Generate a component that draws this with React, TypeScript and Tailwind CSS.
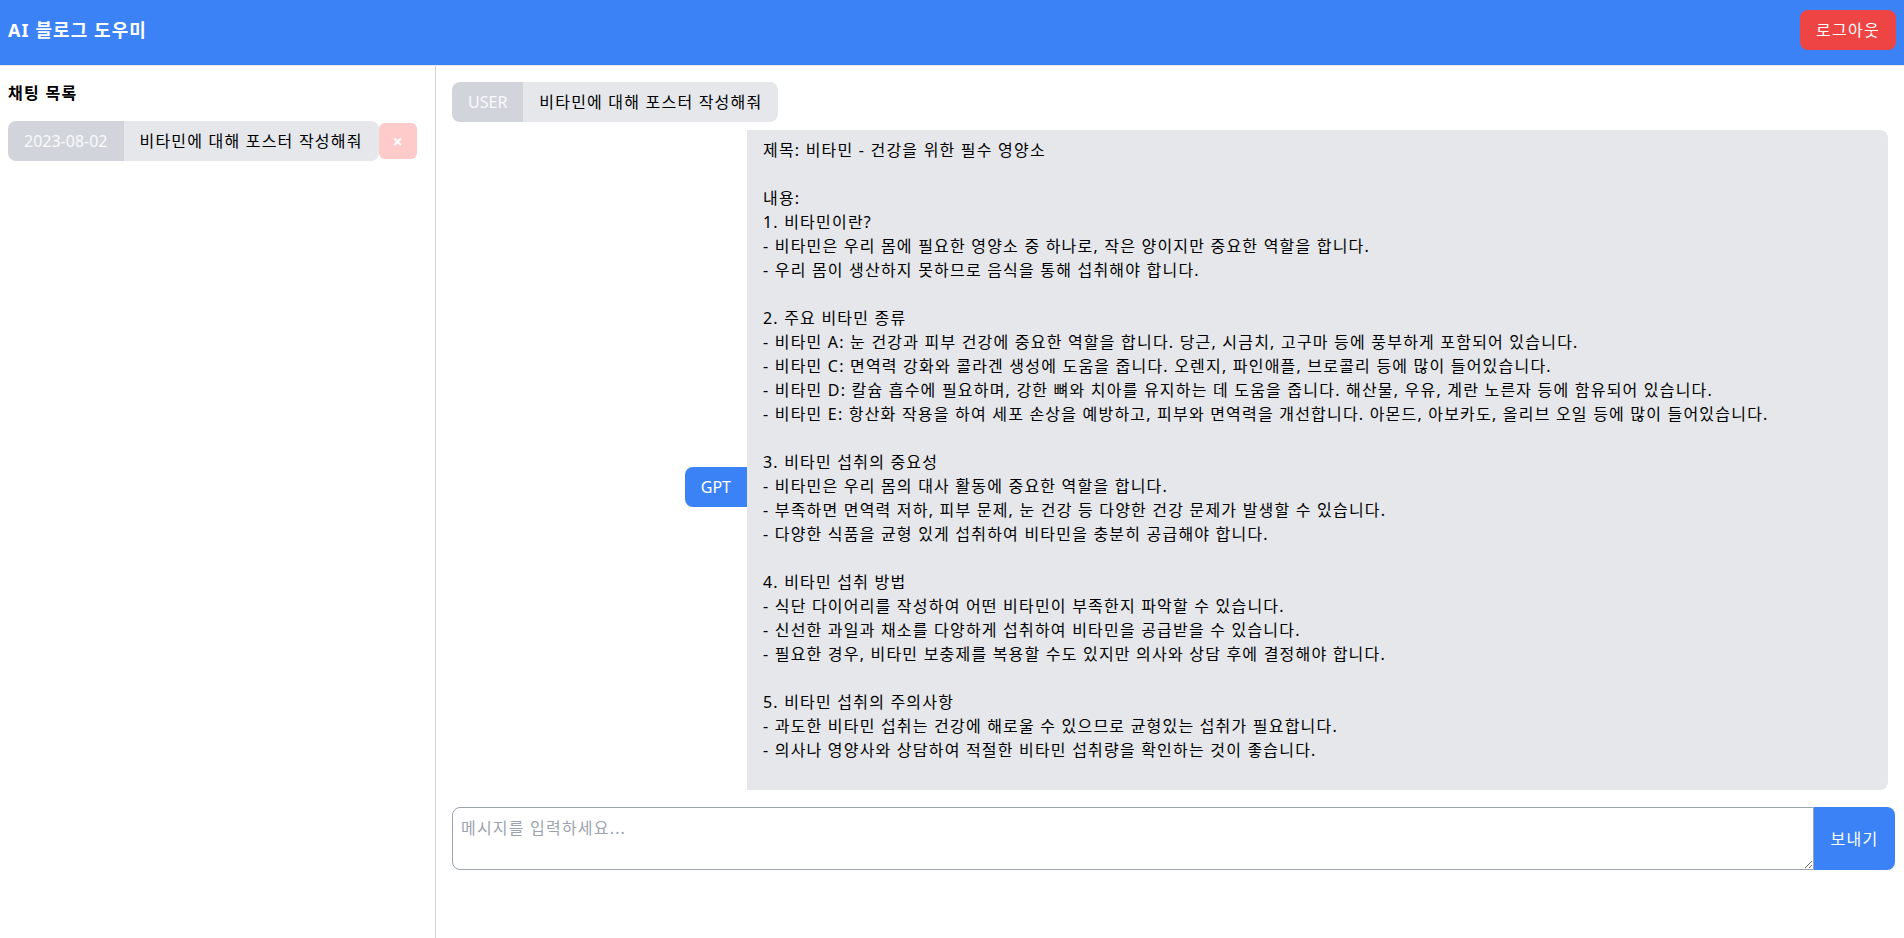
import React from "react";

const gptText = `제목: 비타민 - 건강을 위한 필수 영양소

내용:
1. 비타민이란?
- 비타민은 우리 몸에 필요한 영양소 중 하나로, 작은 양이지만 중요한 역할을 합니다.
- 우리 몸이 생산하지 못하므로 음식을 통해 섭취해야 합니다.

2. 주요 비타민 종류
- 비타민 A: 눈 건강과 피부 건강에 중요한 역할을 합니다. 당근, 시금치, 고구마 등에 풍부하게 포함되어 있습니다.
- 비타민 C: 면역력 강화와 콜라겐 생성에 도움을 줍니다. 오렌지, 파인애플, 브로콜리 등에 많이 들어있습니다.
- 비타민 D: 칼슘 흡수에 필요하며, 강한 뼈와 치아를 유지하는 데 도움을 줍니다. 해산물, 우유, 계란 노른자 등에 함유되어 있습니다.
- 비타민 E: 항산화 작용을 하여 세포 손상을 예방하고, 피부와 면역력을 개선합니다. 아몬드, 아보카도, 올리브 오일 등에 많이 들어있습니다.

3. 비타민 섭취의 중요성
- 비타민은 우리 몸의 대사 활동에 중요한 역할을 합니다.
- 부족하면 면역력 저하, 피부 문제, 눈 건강 등 다양한 건강 문제가 발생할 수 있습니다.
- 다양한 식품을 균형 있게 섭취하여 비타민을 충분히 공급해야 합니다.

4. 비타민 섭취 방법
- 식단 다이어리를 작성하여 어떤 비타민이 부족한지 파악할 수 있습니다.
- 신선한 과일과 채소를 다양하게 섭취하여 비타민을 공급받을 수 있습니다.
- 필요한 경우, 비타민 보충제를 복용할 수도 있지만 의사와 상담 후에 결정해야 합니다.

5. 비타민 섭취의 주의사항
- 과도한 비타민 섭취는 건강에 해로울 수 있으므로 균형있는 섭취가 필요합니다.
- 의사나 영양사와 상담하여 적절한 비타민 섭취량을 확인하는 것이 좋습니다.`;

export default function App() {
  return (
    <div
      className="min-h-screen flex flex-col bg-white text-black"
      style={{ fontFamily: '"Noto Sans", "Noto Sans CJK KR", sans-serif' }}
    >
      <header className="h-[66px] flex items-start justify-between px-2 pt-[10px] bg-[#3b82f6] border-b border-[#e5e7eb]">
        <h1 className="h-10 flex items-center text-lg font-bold text-white tracking-[0.06em]">AI 블로그 도우미</h1>
        <button className="h-10 px-4 rounded-lg bg-[#ef4444] text-white text-base tracking-[0.08em]">로그아웃</button>
      </header>
      <div className="flex-1 flex">
        <aside className="w-[436px] shrink-0 border-r border-[#d1d5db] px-2 pt-[15px]">
          <h2 className="text-base font-bold mb-4 tracking-[0.08em]">채팅 목록</h2>
          <div className="flex items-center">
            <div className="flex h-10 items-center">
              <span className="h-10 flex items-center px-4 rounded-l-lg bg-[#d1d5db] text-[#f9fafb] text-base">2023-08-02</span>
              <span className="h-10 flex items-center px-4 rounded-r-lg bg-[#e5e7eb] text-base tracking-[0.075em]">비타민에 대해 포스터 작성해줘</span>
            </div>
            <button className="w-[38px] h-9 rounded-md bg-[#fecaca] text-white text-lg font-bold flex items-center justify-center">×</button>
          </div>
        </aside>
        <main className="flex-1 flex flex-col pt-4">
          <div className="px-4 flex flex-col gap-2">
            <div className="flex">
              <div className="flex h-10">
                <span className="h-10 flex items-center px-4 rounded-l-lg bg-[#d1d5db] text-[#f9fafb] text-base">USER</span>
                <span className="h-10 flex items-center px-4 rounded-r-lg bg-[#e5e7eb] text-base tracking-[0.075em]">비타민에 대해 포스터 작성해줘</span>
              </div>
            </div>
            <div className="flex justify-end items-center">
              <span className="self-center mt-[54px] h-10 flex items-center px-4 rounded-l-lg bg-[#3b82f6] text-white text-base">GPT</span>
              <div className="w-[1141px] bg-[#e5e7eb] rounded-r-lg px-4 pt-2 pb-[28px] text-base leading-6 whitespace-pre-wrap tracking-[0.075em]">
                {gptText}
              </div>
            </div>
          </div>
          <div className="flex pl-4 pr-[9px] mt-[17px]">
            <textarea
              placeholder="메시지를 입력하세요..."
              className="flex-1 h-[63px] border border-[#9ca3af] rounded-l-lg p-2 text-base leading-6 tracking-[0.075em] placeholder:text-[#9ca3af] outline-none"
            />
            <button className="w-[81px] h-[63px] bg-[#3b82f6] text-white text-base rounded-r-lg tracking-[0.08em]">보내기</button>
          </div>
        </main>
      </div>
    </div>
  );
}
